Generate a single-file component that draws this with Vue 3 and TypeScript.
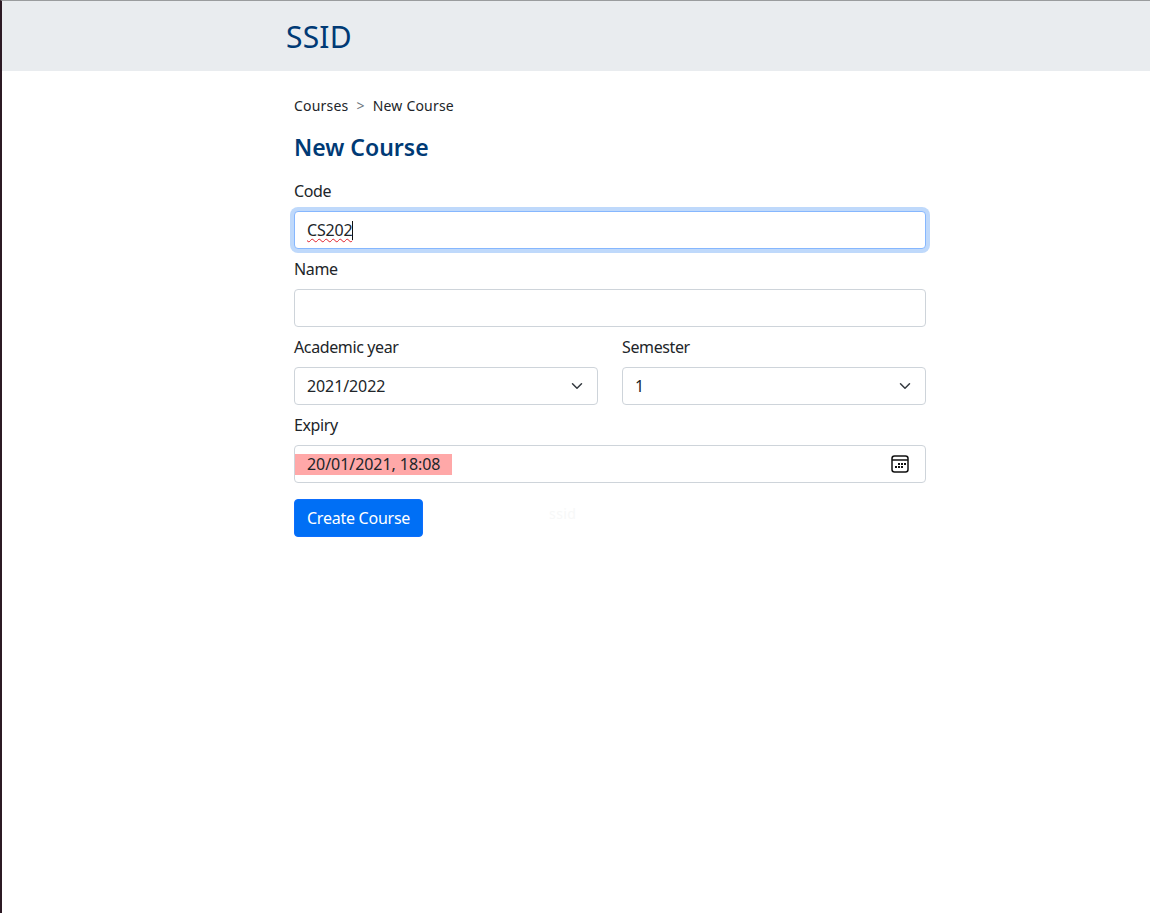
<script setup lang="ts">
const years: string[] = ['2021/2022']
const semesters: string[] = ['1', '2']
</script>

<template>
  <div class="page">
    <header class="navbar">
      <div class="nav-inner"><a class="brand">SSID</a></div>
    </header>
    <main class="container">
      <nav class="crumbs">
        <span>Courses</span><span class="sep">&gt;</span><span>New Course</span>
      </nav>
      <h1 class="title">New Course</h1>
      <form class="form" @submit.prevent>
        <div class="field">
          <label class="label">Code</label>
          <div class="control focused"><span class="typo">CS202</span><span class="caret"></span></div>
        </div>
        <div class="field">
          <label class="label">Name</label>
          <div class="control"></div>
        </div>
        <div class="row">
          <div class="field">
            <label class="label">Academic year</label>
            <div class="select-wrap">
              <select class="control select">
                <option v-for="y in years" :key="y">{{ y }}</option>
              </select>
              <svg class="chev" viewBox="0 0 16 16" width="16" height="12" preserveAspectRatio="xMidYMid meet"><path d="M2 5l6 6 6-6" fill="none" stroke="#343a40" stroke-width="2" stroke-linecap="round" stroke-linejoin="round"/></svg>
            </div>
          </div>
          <div class="field">
            <label class="label">Semester</label>
            <div class="select-wrap">
              <select class="control select">
                <option v-for="s in semesters" :key="s">{{ s }}</option>
              </select>
              <svg class="chev" viewBox="0 0 16 16" width="16" height="12" preserveAspectRatio="xMidYMid meet"><path d="M2 5l6 6 6-6" fill="none" stroke="#343a40" stroke-width="2" stroke-linecap="round" stroke-linejoin="round"/></svg>
            </div>
          </div>
        </div>
        <div class="field">
          <label class="label">Expiry</label>
          <div class="control date">
            <span class="autofill">20/01/2021, 18:08</span>
            <svg class="cal" viewBox="0 0 18 18" width="18" height="18">
              <rect x="1" y="1" width="16" height="16" rx="2.5" fill="none" stroke="#111" stroke-width="1.5"/>
              <path d="M1 5h16" stroke="#111" stroke-width="1.5"/>
              <g fill="#111">
                <rect x="7" y="8" width="2" height="2"/><rect x="10" y="8" width="2" height="2"/><rect x="13" y="8" width="2" height="2"/>
                <rect x="4" y="11" width="2" height="2"/><rect x="7" y="11" width="2" height="2"/><rect x="10" y="11" width="2" height="2"/>
              </g>
            </svg>
          </div>
        </div>
        <div class="actions">
          <button class="btn" type="submit">Create Course</button>
          <span class="ghost">ssid</span>
        </div>
      </form>
    </main>
  </div>
</template>

<style>
html, body { margin: 0; background: #fff; }
</style>

<style scoped>
.page {
  box-sizing: border-box;
  min-height: 913px;
  border-left: 2px solid #2c1a24;
  border-top: 1px solid #9a9c9e;
  font-family: "Noto Sans", "Open Sans", sans-serif;
  font-size: 16px;
  line-height: 24px;
  color: #212529;
  background: #fff;
}
.navbar { background: #e9ecef; height: 70px; display: flex; align-items: center; }
.nav-inner { width: 656px; margin-left: 284px; padding-top: 2px; }
.brand { font-size: 30px; line-height: 36px; letter-spacing: 0.2px; color: #003a75; }
.container { width: 632px; margin-left: 292px; padding-top: 23px; }
.crumbs { display: flex; font-size: 14px; line-height: 24px; height: 24px; letter-spacing: 0.2px; }
.sep { margin: 0 8px; color: #6c757d; }
.title { margin: 15px 0 0; font-size: 23px; line-height: 29px; font-weight: 600; color: #003a75; }
.form { margin-top: 17px; display: flex; flex-direction: column; gap: 8px; }
.field { display: flex; flex-direction: column; min-width: 0; }
.label { margin-bottom: 8px; line-height: 24px; height: 24px; letter-spacing: -0.38px; }
.control {
  box-sizing: border-box;
  width: 100%;
  height: 38px;
  padding: 6px 12px;
  border: 1px solid #ced4da;
  border-radius: 4px;
  background: #fff;
  color: #212529;
  font: inherit;
  line-height: 24px;
  display: flex;
  align-items: center;
}
.select { letter-spacing: -0.1px; }
.focused { border-color: #86b7fe; box-shadow: 0 0 0 4px #bfd9fb; }
.typo { text-decoration: underline wavy #e0202a 1px; text-underline-offset: 2px; letter-spacing: -0.2px; }
.caret { width: 1px; height: 19px; background: #111; }
.row { display: grid; grid-template-columns: 1fr 1fr; gap: 24px; }
.select-wrap { position: relative; }
.select { appearance: none; -webkit-appearance: none; display: block; padding-right: 36px; }
.chev { position: absolute; right: 13px; top: 13px; pointer-events: none; }
.date { padding: 0; justify-content: space-between; }
.autofill {
  display: block;
  height: 21px;
  line-height: 21px;
  padding: 0 12px;
  letter-spacing: -0.06px;
  background: #ffa8a8;
}
.cal { margin-right: 16px; }
.actions { display: flex; align-items: center; margin-top: 8px; position: relative; }
.btn {
  height: 38px;
  padding: 0 12px;
  border: 1px solid #0d6efd;
  border-radius: 4px;
  background: #006ff5;
  color: #fff;
  font: inherit;
  letter-spacing: -0.25px;
}
.ghost { margin-left: 126px; margin-top: -8px; font-size: 14px; letter-spacing: 0.4px; color: #f7f8f8; }
</style>
